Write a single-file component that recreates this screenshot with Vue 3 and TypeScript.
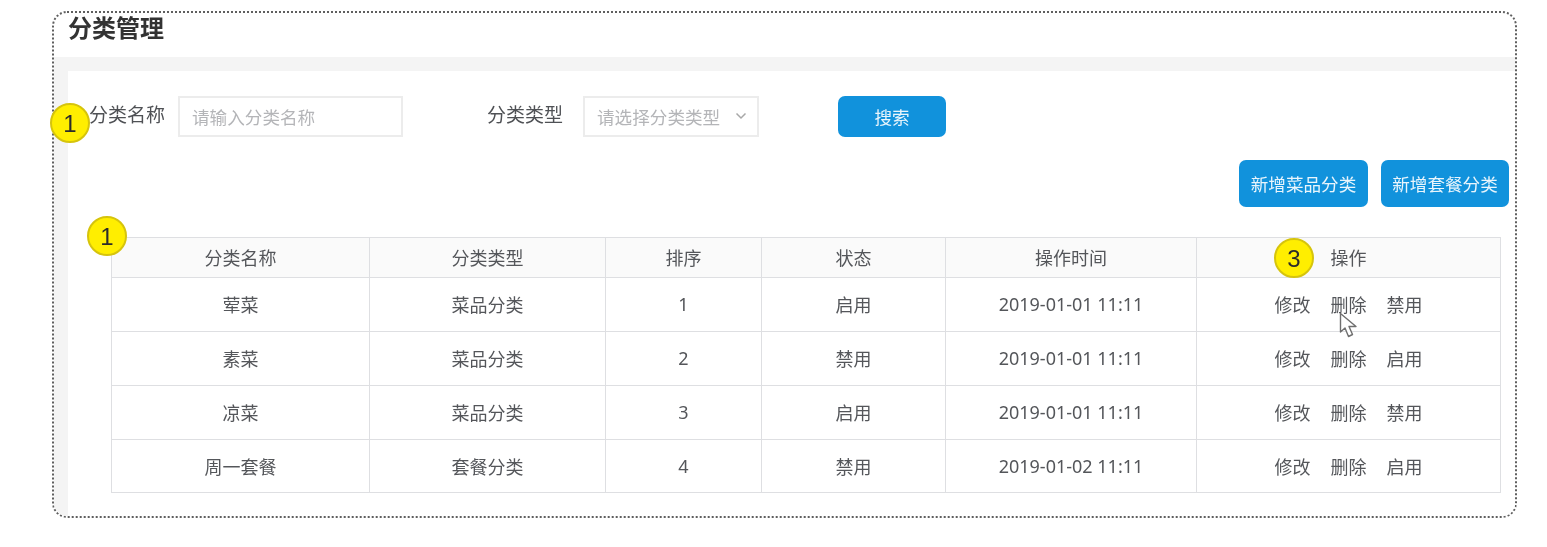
<script setup lang="ts">
interface Row {
  name: string
  type: string
  order: number
  status: string
  time: string
  toggle: string
}

const columns: string[] = ['分类名称', '分类类型', '排序', '状态', '操作时间', '操作']
const widths: number[] = [258, 236, 156, 184, 251, 304]

const rows: Row[] = [
  { name: '荤菜', type: '菜品分类', order: 1, status: '启用', time: '2019-01-01 11:11', toggle: '禁用' },
  { name: '素菜', type: '菜品分类', order: 2, status: '禁用', time: '2019-01-01 11:11', toggle: '启用' },
  { name: '凉菜', type: '菜品分类', order: 3, status: '启用', time: '2019-01-01 11:11', toggle: '禁用' },
  { name: '周一套餐', type: '套餐分类', order: 4, status: '禁用', time: '2019-01-02 11:11', toggle: '启用' },
]
</script>

<template>
  <div class="page">
    <section class="frame">
      <h1 class="title">分类管理</h1>
      <div class="well">
        <div class="content">
          <form class="filters" @submit.prevent>
            <label class="label">分类名称</label>
            <div class="field field-name placeholder">请输入分类名称</div>
            <label class="label label-type">分类类型</label>
            <div class="field field-type placeholder">
              <span>请选择分类类型</span>
              <svg class="chevron" width="12" height="8" viewBox="0 0 12 8" aria-hidden="true">
                <path d="M1.5 1.5 L6 6 L10.5 1.5" fill="none" stroke="#a8a8a8" stroke-width="1.5" />
              </svg>
            </div>
            <button class="btn btn-search" type="button">搜索</button>
          </form>

          <div class="actions">
            <button class="btn btn-add" type="button">新增菜品分类</button>
            <button class="btn btn-add btn-add-set" type="button">新增套餐分类</button>
          </div>

          <table class="table">
            <colgroup>
              <col v-for="(w, i) in widths" :key="i" :style="{ width: w + 'px' }" />
            </colgroup>
            <thead>
              <tr>
                <th v-for="c in columns" :key="c">{{ c }}</th>
              </tr>
            </thead>
            <tbody>
              <tr v-for="r in rows" :key="r.name">
                <td>{{ r.name }}</td>
                <td>{{ r.type }}</td>
                <td>{{ r.order }}</td>
                <td>{{ r.status }}</td>
                <td>{{ r.time }}</td>
                <td>
                  <div class="ops">
                    <span>修改</span>
                    <span>删除</span>
                    <span>{{ r.toggle }}</span>
                  </div>
                </td>
              </tr>
            </tbody>
          </table>
        </div>
      </div>

      <span class="badge badge-a">1</span>
      <span class="badge badge-b">1</span>
      <span class="badge badge-c">3</span>
      <svg class="cursor" width="22" height="28" viewBox="0 0 22 28" aria-hidden="true">
        <path
          d="M1.5 1.5 L1.5 20 L6 16 L9.5 24.5 L13.5 22.5 L10 14.5 L17 14.5 Z"
          fill="#fff"
          stroke="#6f6f6f"
          stroke-width="1.4"
          stroke-linejoin="round"
        />
      </svg>
    </section>
  </div>
</template>

<style scoped>
.page {
  width: 1547px;
  height: 547px;
  padding: 11px 0 0 52px;
  box-sizing: border-box;
  background: #fff;
  overflow: hidden;
  font-family: "Noto Sans", "Noto Sans CJK SC", sans-serif;
  color: #54565a;
  font-size: 18px;
  filter: blur(0.45px);
}
.frame {
  position: relative;
  width: 1465px;
  height: 507px;
  box-sizing: border-box;
  border: 2px dotted #5f5f5f;
  border-radius: 15px;
  display: flex;
  flex-direction: column;
}
.title {
  margin: 0;
  height: 44px;
  padding-left: 14px;
  font-size: 24px;
  line-height: 30px;
  font-weight: 700;
  color: #333;
  flex: none;
}
.well {
  flex: 1;
  padding: 14px 0 0 14px;
  background: #f4f4f4;
  border-radius: 0 0 13px 13px;
  display: flex;
  min-height: 0;
}
.content {
  flex: 1;
  background: #fff;
  padding: 25px 6px 0 21px;
  border-bottom-right-radius: 13px;
}
.filters {
  display: flex;
  align-items: center;
  height: 41px;
}
.label {
  width: 76px;
  font-size: 19px;
  line-height: 40px;
  margin-top: -4px;
  color: #4f5155;
}
.field {
  box-sizing: border-box;
  height: 41px;
  border: 2px solid #ececec;
  display: flex;
  align-items: center;
  justify-content: space-between;
  padding: 0 12px;
  background: #fff;
}
.placeholder {
  color: #b4b5b8;
  font-size: 17.6px;
}
.field-name {
  width: 225px;
  margin-left: 13px;
}
.label-type {
  margin-left: 84px;
}
.field-type {
  width: 176px;
  margin-left: 20px;
}
.chevron {
  flex: none;
  margin: -2px -2px 0 0;
}
.btn {
  border: 0;
  border-radius: 7px;
  background: #1192dc;
  color: #e9f5fc;
  font: inherit;
  font-size: 17.6px;
  padding: 0;
}
.btn-search {
  width: 108px;
  height: 41px;
  margin-left: 79px;
}
.actions {
  display: flex;
  justify-content: flex-end;
  gap: 13px;
  margin-top: 23px;
}
.btn-add {
  width: 129px;
  height: 47px;
}
.btn-add-set {
  width: 128px;
}
.table {
  width: 1389px;
  margin: 30px 0 0 22px;
  border-collapse: collapse;
  table-layout: fixed;
  font-size: 18px;
}
th,
td {
  border: 1px solid #dedfe2;
  text-align: center;
  padding: 0 0 2px;
  font-weight: 400;
}
th {
  height: 37px;
  background: #fafafa;
}
td {
  height: 51px;
}
tbody tr:last-child td {
  height: 52px;
  padding-bottom: 0;
}
.ops {
  display: flex;
  justify-content: center;
  gap: 20px;
}
.badge {
  position: absolute;
  box-sizing: border-box;
  width: 40px;
  height: 40px;
  border-radius: 50%;
  border: 2px solid #d6c40c;
  background: #ffee00;
  color: #2b2b2b;
  font-family: "Liberation Sans", sans-serif;
  font-size: 24px;
  line-height: 38px;
  text-align: center;
}
.badge-a {
  left: -4px;
  top: 90px;
}
.badge-b {
  left: 33px;
  top: 203px;
}
.badge-c {
  left: 1220px;
  top: 225px;
}
.cursor {
  position: absolute;
  left: 1285px;
  top: 299px;
}
</style>
